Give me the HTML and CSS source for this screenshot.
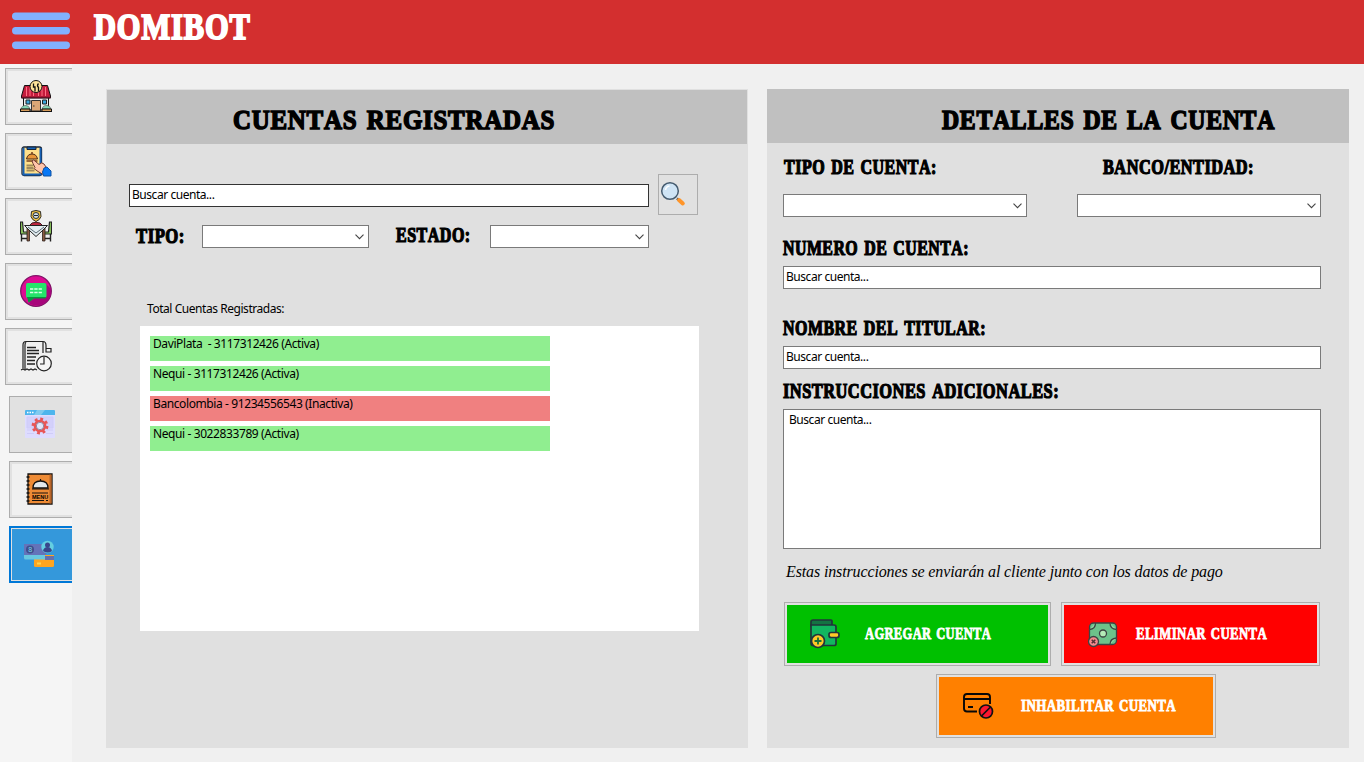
FILE: index.html
```
<!DOCTYPE html>
<html lang="es">
<head>
<meta charset="utf-8">
<title>Domibot</title>
<link rel="stylesheet" href="styles.css">
</head>
<body>
<header class="topbar">
  <svg class="burger" viewBox="0 0 58 38" width="58" height="38"><g fill="#82b1ff"><rect width="58" height="7.5" rx="3.7" y="0.5"/><rect width="58" height="7.5" rx="3.7" y="15"/><rect width="58" height="7.5" rx="3.7" y="29.500"/></g></svg>
  <h1 class="brand stencil">DOMIBOT</h1>
</header>
<div class="body">
  <nav class="sidebar">
    <button class="nav"><svg viewBox="0 0 32 32" width="32" height="32">
      <path d="M3.500 17h25v13h-25z" fill="#eceff1" stroke="#111"/>
      <path d="M4.500 5.500h23l3 10.500v2h-29v-2z" fill="#c51c3d" stroke="#111"/>
      <path d="M6.500 7v9M10 7v9M13.500 11v5M18.500 11v5M22 7v9M25.500 7v9" stroke="#ff7184" fill="none"/>
      <path d="M1.500 17.500h29" stroke="#651226" stroke-width="1.500"/>
      <circle cx="16" cy="6.500" r="6" fill="#ffe39a" stroke="#111"/><path d="M13.500 3.500v3.500h1.500v4.500M18.500 3.500q-2 2 0 4v4" fill="none" stroke="#111" stroke-width="1.300"/>
      <path d="M11.500 20.500h9V31h-9z" fill="#dca777" stroke="#333"/><path d="M13 26h1.500" stroke="#333"/>
      <path d="M6 20h4v4H6zM22.500 20h4v4h-4z" fill="#37a6df" stroke="#222"/>
      <path d="M1 29q1-4 5-3.500 3 0 4 3.500zM22 29q1-4 5-3.500 3 0 4 3.500z" fill="#83d4b4" stroke="#555" stroke-width=".6"/>
      <path d="M.5 29H10v2.500H.5zM22 29h9.500v2.500H22z" fill="#d49b5b" stroke="#111"/><path d="M0 31.500h32" stroke="#111"/>
    </svg></button>
    <button class="nav"><svg viewBox="0 0 32 32" width="32" height="32">
      <rect x="2" y="2" width="19.500" height="28.500" rx="2" fill="#ffe08b" stroke="#172437" stroke-width="1.300"/><path d="M3.500 3v26.500h17V3" fill="none" stroke="#1761b5" stroke-width="2"/>
      <path d="M7 2h9v2.500H7z" fill="#1763b8" stroke="#172437"/>
      <path d="M6.500 14q1-5 5.500-5t5.500 5z" fill="#e99638" stroke="#4a2b17"/><path d="M12 7v2M6.500 16h11" stroke="#7b431f" stroke-width="1.600"/>
      <path d="M6.500 20.500h7M6.500 23h7M6.500 25.500h8" stroke="#a18b5c" stroke-width="1.800"/>
      <path d="M12 16q1.500-2 3 0l4 3.500q3-3 5-.5l4 6-4 5-6-3.500-4-3 1-1-2-4z" fill="#ffc5aa" stroke="#6c3933"/>
      <path d="M24 23l3-1 4 4v5h-7.500l-1-4z" fill="#0878f6" stroke="#1052a2"/>
    </svg></button>
    <button class="nav"><svg viewBox="0 0 32 32" width="32" height="32">
      <path d="M11.500 1.500Q16-.5 20.500 1.500l.5 5q-1 3.500-5 5-4-1.500-5-5z" fill="#f3c444" stroke="#2c2b25"/>
      <circle cx="16" cy="5.500" r="3" fill="#cfdce5" stroke="#283137"/><path d="M14 5.500h4" stroke="#222"/>
      <path d="M12 13q4-1.500 8 0l3 3H9z" fill="#be2740" stroke="#461922"/>
      <path d="M.5 12h2l1 10h4.500v2H.5zM31.500 12h-2l-1 10H24v2h7.500z" fill="#91ce62" stroke="#222" stroke-width="1.200"/>
      <path d="M1.500 31.500V24m0 4.500h6M30.500 31.500V24m0 4.500h-6" fill="none" stroke="#222" stroke-width="1.400"/>
      <path d="M7 16v15h2.500V16zM22.500 16v15H25V16z" fill="#8a5b43" stroke="#2f211c" stroke-width=".8"/>
      <path d="M4.500 15.500h23L22 21l-6 5.500-6-5.500z" fill="#e4eef2" stroke="#222"/><path d="M8 17l8 6 8-6" fill="none" stroke="#586872"/>
    </svg></button>
    <button class="nav"><svg viewBox="0 0 32 32" width="32" height="32">
      <circle cx="16" cy="16" r="15.300" fill="#dc0b92" stroke="#811268" stroke-width="1.300"/>
      <path d="M25 8l6 6q1 9-6 14-7 4-15 1l-2-4z" fill="#a7057b"/>
      <path d="M7.500 8h17q2 0 2 2v11q0 2-2 2H14l-5.500 4.500V23h-1q-1.500 0-1.500-2V10q0-2 1.500-2z" fill="#25e46a"/>
      <path d="M7 22h19q0 1.500-2 1.500H14l-5.500 4z" fill="#07943d"/>
      <path d="M10 14h12M10 17.500h12" stroke="#d8ffe5" stroke-width="1.700" stroke-dasharray="3.300 1"/>
    </svg></button>
    <button class="nav"><svg viewBox="0 0 32 32" width="32" height="32">
      <g fill="none" stroke="#222" stroke-width="1.200"><path d="M3 29V5q0-3.500 3-3.500h17q3 0 3 4v3h5v3.500h-5V8M6 2q-1 1-1 3v24M23 1.500V13M1 30l2-1 2 1 2-1 2 1 2-1 2 1 2-1 2 1"/>
      <path d="M7 7.500h9M7 10.500h12M7 13.500h12M7 17h9M7 20.500h8M7 24h8" stroke-width="1.400"/><circle cx="24" cy="23.500" r="7.300" fill="#f5f5f5"/><path d="M24 17v7h-4"/></g>
    </svg></button>
    <button class="nav sub plain"><svg viewBox="0 0 32 32" width="32" height="32">
      <path d="M1 3h30v26q0 1-1 1H2q-1 0-1-1z" fill="#dedcff"/><path d="M1 7V3q0-1 1-1h28q1 0 1 1v4z" fill="#4eb5ed"/><path d="M13 2h8l-4 5h-7z" fill="#80caef"/>
      <path d="M3 4.500h7" stroke="#fff" stroke-width="1.300" stroke-dasharray="1.500 1"/><path d="M3 9h26v11H3zM3 22h7M22 22h7M3 25.500h7M22 25.500h7" stroke="#cfccf8" fill="#d3d0fb"/>
      <circle cx="16" cy="18" r="7" fill="none" stroke="#e85757" stroke-width="2.800" stroke-dasharray="2.800 2.700"/><circle cx="16" cy="18" r="5" fill="#dfe7fb" stroke="#e85757" stroke-width="2.700"/><circle cx="16" cy="18" r="3.700" fill="#dfe7fb" stroke="#81738d" stroke-width=".8"/>
    </svg></button>
    <button class="nav sub"><svg viewBox="0 0 32 32" width="32" height="32">
      <path d="M4 1h24v30H4z" fill="#ee8b35" stroke="#16120f" stroke-width="1.300"/><path d="M25.500 1.500h2v29h-2z" fill="#b9652a"/><path d="M2.500 4h3M2.500 8h3M2.500 12h3M2.500 16h3M2.500 20h3M2.500 24h3M2.500 28h3" stroke="#111" stroke-width="1.700"/>
      <path d="M9 15q0-7 7.500-7t7.500 7z" fill="#e2e8eb" stroke="#111" stroke-width="1.300"/><path d="M16.500 6v2M8 16h17M8 20h16M8 27.500h12m2 0h2" stroke="#171310" stroke-width="1.200"/>
      <text class="menu-mark" x="8" y="26">MENU</text>
    </svg></button>
    <button class="nav sub active"><svg viewBox="0 0 32 32" width="32" height="32">
      <path d="M0 4h22v15H0z" fill="#6473b9"/><path d="M0 15h22v3q0 1.500-1.500 1.500h-19Q0 19.500 0 18z" fill="#68c7df"/><circle cx="6" cy="9.500" r="4" fill="#3f4e8d"/><text class="coin-mark" x="4.200" y="12">8</text>
      <path d="M10 15h20v10.500q0 1.500-1.500 1.500h-17q-1.500 0-1.500-1.500z" fill="#ffa51f"/><path d="M10 15h11v4.500H10z" fill="#68c7df"/><path d="M21 16h9v4h-9z" fill="#6570ad"/><path d="M13 22.500h4v2h-4z" fill="#ffd34d"/>
      <circle cx="23.500" cy="7" r="6.200" fill="#64cfe1"/><circle cx="23.500" cy="5" r="2.500" fill="#39468b"/><path d="M19 11q1-4 4.500-4t4.500 4q-4 3-9 0z" fill="#39468b"/>
    </svg></button>
  </nav>
  <main class="main">
    <section class="panel list-panel">
      <div class="panel-head"><h2 class="stencil title-list">CUENTAS REGISTRADAS</h2></div>
      <div class="search-row">
        <div class="field search-field">Buscar cuenta...</div>
        <button class="search-btn"><svg viewBox="0 0 26 26" width="26" height="26"><path d="M17 17.500l3 2.500" stroke="#405361" stroke-width="2.500"/><path d="M19 19l3.800 3.500" stroke="#ff9529" stroke-width="4" stroke-linecap="round"/><circle cx="10" cy="10" r="8.300" fill="#cfe4f5" stroke="#465c70" stroke-width="1.500"/><path d="M5.500 9q.5-3.500 4-4" fill="none" stroke="#fff" stroke-width="1.500"/></svg></button>
      </div>
      <div class="filters">
        <span class="label"><span class="stencil s-tipo">TIPO:</span></span>
        <div class="combo combo-tipo"><svg class="chev" viewBox="0 0 9 6" width="9" height="6"><path d="M.5.700l4 4 4-4"/></svg></div>
        <span class="label label-estado"><span class="stencil s-estado">ESTADO:</span></span>
        <div class="combo combo-estado"><svg class="chev" viewBox="0 0 9 6" width="9" height="6"><path d="M.5.700l4 4 4-4"/></svg></div>
      </div>
      <p class="total">Total Cuentas Registradas:</p>
      <ul class="accounts">
        <li class="account">DaviPlata&nbsp; - 3117312426 (Activa)</li>
        <li class="account">Nequi - 3117312426 (Activa)</li>
        <li class="account inactive">Bancolombia - 91234556543 (Inactiva)</li>
        <li class="account">Nequi - 3022833789 (Activa)</li>
      </ul>
    </section>
    <section class="panel detail-panel">
      <div class="panel-head"><h2 class="stencil title-detail">DETALLES DE LA CUENTA</h2></div>
      <div class="form">
        <div class="pair">
          <div class="group"><span class="label"><span class="stencil s-type">TIPO DE CUENTA:</span></span>
            <div class="combo"><svg class="chev" viewBox="0 0 9 6" width="9" height="6"><path d="M.5.700l4 4 4-4"/></svg></div></div>
          <div class="group"><span class="label label-bank"><span class="stencil s-bank">BANCO/ENTIDAD:</span></span>
            <div class="combo"><svg class="chev" viewBox="0 0 9 6" width="9" height="6"><path d="M.5.700l4 4 4-4"/></svg></div></div>
        </div>
        <span class="label label-number"><span class="stencil s-number">NUMERO DE CUENTA:</span></span>
        <div class="field">Buscar cuenta...</div>
        <span class="label label-name"><span class="stencil s-name">NOMBRE DEL TITULAR:</span></span>
        <div class="field">Buscar cuenta...</div>
        <span class="label label-notes"><span class="stencil s-notes">INSTRUCCIONES ADICIONALES:</span></span>
        <div class="field notes">Buscar cuenta...</div>
        <p class="hint">Estas instrucciones se enviarán al cliente junto con los datos de pago</p>
        <div class="actions">
          <button class="action add"><svg viewBox="0 0 32 32" width="32" height="32">
            <g stroke="#22343a" stroke-width="1.700"><path d="M2 8V4q0-2 2-2h18q1 0 1 1v6H3z" fill="#147342"/><path d="M2 7h23q2 0 2 2v17q0 1.500-2 1.500H4Q2 27.500 2 25z" fill="#12b660"/><rect x="20" y="14.500" width="10" height="5" rx="2" fill="#ffc927"/><circle cx="9" cy="23" r="6.500" fill="#ffc927"/></g><path d="M9 19.500v7M5.500 23h7" stroke="#187036" stroke-width="1.800"/>
          </svg><span class="stencil s-add">AGREGAR CUENTA</span></button>
          <button class="action remove"><svg viewBox="0 0 32 32" width="32" height="32">
            <g stroke="#3c4442" stroke-width="1.300"><rect x="2.500" y="5" width="27" height="21.500" rx="4" fill="#6dc28a"/><path d="M8.500 5q0 6-6 6.500M23 5q0 6 6.500 6.500M23 26.500q0-6 6.500-6.500M2.500 20q6 0 6 6" fill="#91d9a4"/><circle cx="16" cy="15.500" r="3.500" fill="#b4ebb7"/><circle cx="6.500" cy="23.500" r="5" fill="#f5898c"/></g><path d="M4.700 21.700l3.600 3.600m0-3.600l-3.600 3.600" stroke="#502f33" stroke-width="1.500"/>
          </svg><span class="stencil s-remove">ELIMINAR CUENTA</span></button>
          <button class="action disable"><svg viewBox="0 0 32 32" width="32" height="32">
            <path d="M15 21.500H5q-3 0-3-3V7q0-3 3-3h20q3 0 3 3v7M2 9h26M6 17h5" fill="none" stroke="#080808" stroke-width="1.900"/><circle cx="24" cy="21.500" r="6.500" fill="#fc1730" stroke="#111" stroke-width="1.700"/><path d="M19.500 26l9-9" stroke="#111" stroke-width="1.700"/>
          </svg><span class="stencil s-disable">INHABILITAR CUENTA</span></button>
        </div>
      </div>
    </section>
  </main>
</div>
</body>
</html>
```
FILE: styles.css
```
* { box-sizing: border-box; }
body { margin: 0; width: 1364px; height: 762px; overflow: hidden; background: #f0f0f0; color: #000; font: 12px/16px "Noto Sans", sans-serif; letter-spacing: -0.45px; }
h1, h2, p, ul { margin: 0; padding: 0; }
button { font: inherit; letter-spacing: inherit; border-radius: 0; margin: 0; padding: 0; }
svg { display: block; flex: none; }

/* Heavy display lettering, condensed per label */
.stencil { display: inline-block; white-space: nowrap; font-family: "Liberation Serif", serif; font-weight: bold; letter-spacing: .03em; word-spacing: .1em; font-kerning: none; transform: scaleX(var(--sx, 1)); transform-origin: 0 50%; -webkit-text-stroke: 1.2px currentColor; }

.topbar { display: flex; height: 64px; background: #d32f2f; padding-left: 12px; }
.burger { margin-top: 12px; }
.brand { --sx: .844; margin: 7px 0 0 24px; color: #fff; font-size: 36px; line-height: 40px; -webkit-text-stroke-width: 2px; }

.body { display: flex; height: 698px; }
.sidebar { width: 72px; background: #f5f5f5; padding: 4px 0 0 5px; display: flex; flex-direction: column; gap: 8px; overflow: hidden; }
.nav { width: 67px; height: 57px; flex: none; display: flex; align-items: flex-start; padding: 11px 0 0 14px; background: #f0f0f0; border: 1px solid #adadad; border-right: 0; box-shadow: inset 2px 2px #e1e1e1, inset 0 -2px #e1e1e1; }
.nav.sub { width: 63px; margin-left: 4px; }
.nav.plain { margin-top: 3px; background: #e1e1e1; }
.nav.active { border: 2px solid #0078d7; border-right: 0; background: #3498db; box-shadow: inset 1px 1px #e1e1e1, inset 0 -1px #e1e1e1; padding: 12px 0 0 13px; }
.menu-mark { font: bold 5.5px "Liberation Sans", sans-serif; letter-spacing: 0; }
.coin-mark { font: 7px "Liberation Sans", sans-serif; fill: #7bd5e8; }

.main { flex: 1; display: grid; grid-template-columns: 642px 582px; column-gap: 19px; padding: 25px 0 0 34px; }
.panel { height: 659px; background: #e0e0e0; }
.panel-head { height: 54px; background: #c0c0c0; font-size: 27px; }
.panel-head h2 { font-size: 27px; line-height: 28px; -webkit-text-stroke-width: 1.5px; }
.list-panel { padding: 1px 1px 0; }
.title-list { --sx: .923; margin: 16px 0 0 126px; }
.title-detail { --sx: .88; margin: 17px 0 0 175px; }

.field, .combo { height: 23px; background: #fff; border: 1px solid #7a7a7a; }
.field { padding: 2px 2px; }
.search-row { display: flex; gap: 9px; margin: 30px 0 0 22px; }
.search-field { width: 520px; margin-top: 10px; border-color: #333; }
.search-btn { display: flex; align-items: flex-start; width: 40px; height: 41px; padding: 6px 0 0 1px; background: #e1e1e1; border: 1px solid #adadad; }
.filters { display: flex; margin: 10px 0 0 29px; }
.combo { display: flex; align-items: center; justify-content: flex-end; padding-right: 4px; }
.chev { fill: none; stroke: #444; stroke-width: 1.1; }
.combo-tipo { width: 167px; }
.combo-estado { width: 159px; }
.label { display: block; height: 20px; font-size: 20px; line-height: 20px; }
.filters .label { width: 66px; margin-top: 1px; }
.filters .label-estado { width: 94px; margin: 0 0 0 27px; }
.s-tipo { --sx: .835; } .s-estado { --sx: .802; } .s-type { --sx: .801; } .s-bank { --sx: .816; }
.s-number { --sx: .794; } .s-name { --sx: .7985; } .s-notes { --sx: .819; }

.total { margin: 53px 0 0 40px; }
.accounts { list-style: none; width: 559px; height: 305px; margin: 9px 0 0 33px; padding: 10px; background: #fff; display: flex; flex-direction: column; gap: 5px; letter-spacing: -0.4px; }
.account { width: 400px; height: 25px; padding-left: 3px; background: #90ee90; }
.account.inactive { background: #f08080; }

.form { padding: 14px 28px 0 16px; }
.pair { display: grid; grid-template-columns: 244px 244px; justify-content: space-between; }
.group .label { margin: 0 0 17px 1px; }
.group .label-bank { margin-left: 26px; }
.label-number { margin: 21px 0 8px; }
.label-name { margin: 29px 0 8px; }
.label-notes { margin: 12px 0 8px; }
.notes { height: 140px; padding: 2px 5px; }
.hint { margin: 13px 0 0 3px; white-space: nowrap; font: italic 16px/20px "Liberation Serif", serif; letter-spacing: -0.13px; }
.actions { display: flex; flex-wrap: wrap; gap: 8px 10px; margin: 20px 0 0 1px; }
.action { height: 64px; display: flex; align-items: center; color: #fff; border: 1px solid #adadad; box-shadow: inset 0 0 0 2px #e1e1e1; font-size: 16px; }
.action .stencil { font-size: 16px; line-height: 18px; -webkit-text-stroke-width: .8px; }
.add { width: 267px; background: #00c000; padding-left: 24px; }
.add svg { margin-right: 24px; }
.remove { width: 259px; background: #f00; padding-left: 25px; }
.remove svg { margin-right: 17px; }
.disable { width: 280px; margin-left: 152px; background: #ff8000; padding-left: 25px; }
.disable svg { margin-right: 27px; }
.s-add { --sx: .78; } .s-remove { --sx: .8; } .s-disable { --sx: .811; }
```
